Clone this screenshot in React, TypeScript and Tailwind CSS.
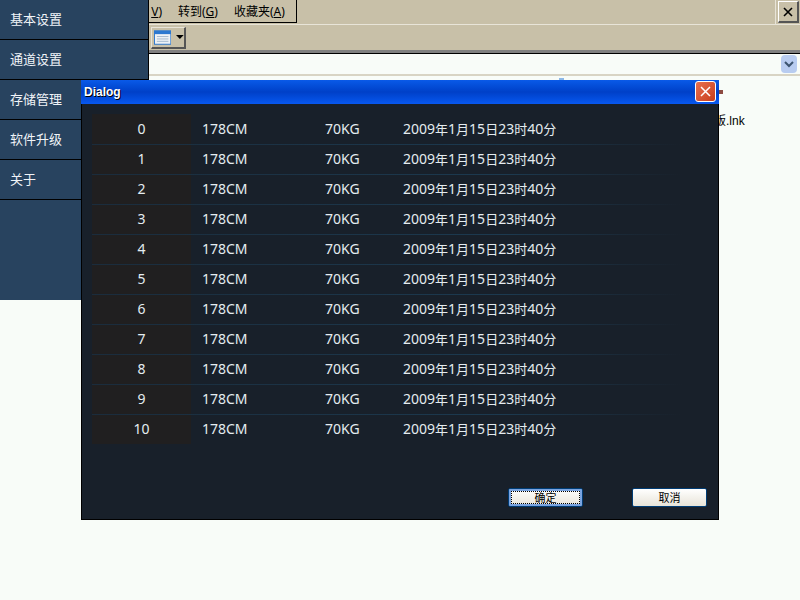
import React from 'react';

const font = { fontFamily: '"Noto Sans", "Noto Sans CJK SC", sans-serif' };

const navItems = ['基本设置', '通道设置', '存储管理', '软件升级', '关于'];
const rows = [0, 1, 2, 3, 4, 5, 6, 7, 8, 9, 10];

// browser window left behind the dialog
const BrowserChrome = () => (
  <div className="flex flex-col">
    <div className="flex h-[25px] justify-between border-b border-[#e8e4d8] bg-[#c8c0a8] pl-[149px]">
      <div className="flex h-[23px] w-[148px] items-center gap-4 border-r border-b border-black pt-[2px] text-xs text-black">
        <span className="w-[13px] shrink-0 text-right"><u>V</u>)</span>
        <span className="whitespace-nowrap">转到(<u>G</u>)</span>
        <span className="whitespace-nowrap">收藏夹(<u>A</u>)</span>
      </div>
      <div className="flex h-[24px] w-[25px] items-center justify-center border-l border-[#e8e4d8]">
        <div className="flex h-[22px] w-[21px] items-center justify-center border-t border-r-2 border-b-2 border-l border-t-white border-r-[#555] border-b-[#555] border-l-white">
          <svg width="10" height="10" viewBox="0 0 10 10">
            <path d="M1 1 9 9M9 1 1 9" stroke="#000" strokeWidth="1.6" />
          </svg>
        </div>
      </div>
    </div>
    <div className="flex h-[28px] items-center border-b-[3px] border-[#808080] bg-[#c8c0a8] pl-[151px]">
      <div className="flex h-[22px] w-[35px] items-center gap-[5px] border-t border-r-2 border-b-2 border-l border-t-[#e8e4d8] border-r-[#555] border-b-[#555] border-l-[#e8e4d8] pl-[2px]">
        <svg width="18" height="15" viewBox="0 0 18 15">
          <rect width="18" height="15" fill="#2c78d0" />
          <rect x="1" y="4" width="16" height="10" fill="#eef2f6" />
          <path d="M3 6.5h12M3 9h12M3 11.5h12" stroke="#a4b8cc" strokeWidth="1" />
        </svg>
        <svg width="8" height="4" viewBox="0 0 8 4">
          <path d="M0 0h8L4 4z" fill="#000" />
        </svg>
      </div>
    </div>
    <div className="flex h-[23px] items-center justify-end border-t border-b-[2px] border-t-black border-b-[#d8d4c4] bg-[#f8fcf8] pr-[3px]">
      <div className="flex h-[18px] w-[16px] items-center justify-center rounded-sm bg-[#b8ccf0]">
        <svg width="10" height="7" viewBox="0 0 10 7">
          <path d="M1 1l4 4 4-4" fill="none" stroke="#3c5470" strokeWidth="2" />
        </svg>
      </div>
    </div>
  </div>
);

const App = () => {
  return (
    <div className="relative h-[600px] w-[800px] overflow-hidden bg-[#f8fcf8]" style={font}>
      <BrowserChrome />

      {/* bits of the desktop that stick out past the dialog */}
      <span
        className="absolute left-[714px] top-[113px] text-xs leading-4 text-black"
        style={{ fontFamily: '"Liberation Sans", "Noto Sans CJK SC", sans-serif' }}
      >
        版.lnk
      </span>
      <div className="absolute left-[718px] top-[90px] h-[4px] w-[5px] bg-[#8c4a40]" />
      <div className="absolute left-[559px] top-[78px] h-[2px] w-[5px] bg-[#8cb8e8]" />

      {/* side menu */}
      <div className="absolute left-0 top-0 h-[300px] w-[149px] border-r border-black bg-[#28435f]">
        {navItems.map((item) => (
          <div
            key={item}
            className="flex h-10 items-center border-b border-black pl-[10px] text-[13px] text-[#f0f4f8]"
          >
            {item}
          </div>
        ))}
      </div>

      {/* dialog */}
      <div className="absolute left-[81px] top-[80px] flex h-[440px] w-[638px] flex-col bg-[#18202a]">
        <div className="flex h-6 shrink-0 items-center justify-between bg-gradient-to-b from-[#0a5ae8] via-[#0040c8] to-[#0858f0] pl-[3px] pr-[3px]">
          <span
            className="text-xs font-bold text-white [text-shadow:1px_1px_0_#000]"
            style={{ fontFamily: '"Liberation Sans", sans-serif' }}
          >
            Dialog
          </span>
          <div className="mb-[2px] flex h-[21px] w-[21px] items-center justify-center rounded-[3px] border border-white bg-gradient-to-br from-[#e87050] to-[#c83c18]">
            <svg width="11" height="11" viewBox="0 0 11 11">
              <path d="M1 1l9 9M10 1l-9 9" stroke="#fff" strokeWidth="1.5" />
            </svg>
          </div>
        </div>
        <div className="flex flex-1 flex-col border-x border-b border-black">
          <div className="flex flex-col pl-[10px] pt-[10px]">
            {rows.map((n) => (
              <div key={n} className="relative flex h-[30px] items-center text-sm text-[#e4ecf0]">
                <div className="flex h-full w-[99px] items-center justify-center bg-[#201f20]">{n}</div>
                <span className="ml-[11px] w-[123px]">178CM</span>
                <span className="w-[78px]">70KG</span>
                <span>
                  2009<span className="text-[13px]">年</span>1<span className="text-[13px]">月</span>15
                  <span className="text-[13px]">日</span>23<span className="text-[13px]">时</span>40
                  <span className="text-[13px]">分</span>
                </span>
                {n > 0 && (
                  <div className="absolute left-0 top-0 h-px w-[590px] bg-gradient-to-r from-[#1a2c3c] via-[#1c3a50] via-70% to-[#18202a]" />
                )}
              </div>
            ))}
          </div>
          <div className="mt-auto flex justify-end gap-[49px] pb-[12px] pr-[11px]">
            <button className="flex h-[19px] w-[75px] items-center justify-center rounded-[2px] border border-[#003c74] bg-gradient-to-b from-white to-[#e8e4d8] text-[11px] leading-none text-black shadow-[inset_0_0_0_2px_#7aa4e0] outline-1 outline-offset-[-4px] outline-black outline-dotted">
              确定
            </button>
            <button className="flex h-[19px] w-[75px] items-center justify-center rounded-[2px] border border-[#003c74] bg-gradient-to-b from-white to-[#e8e4d8] text-[11px] leading-none text-black">
              取消
            </button>
          </div>
        </div>
      </div>
    </div>
  );
};

export default App;
